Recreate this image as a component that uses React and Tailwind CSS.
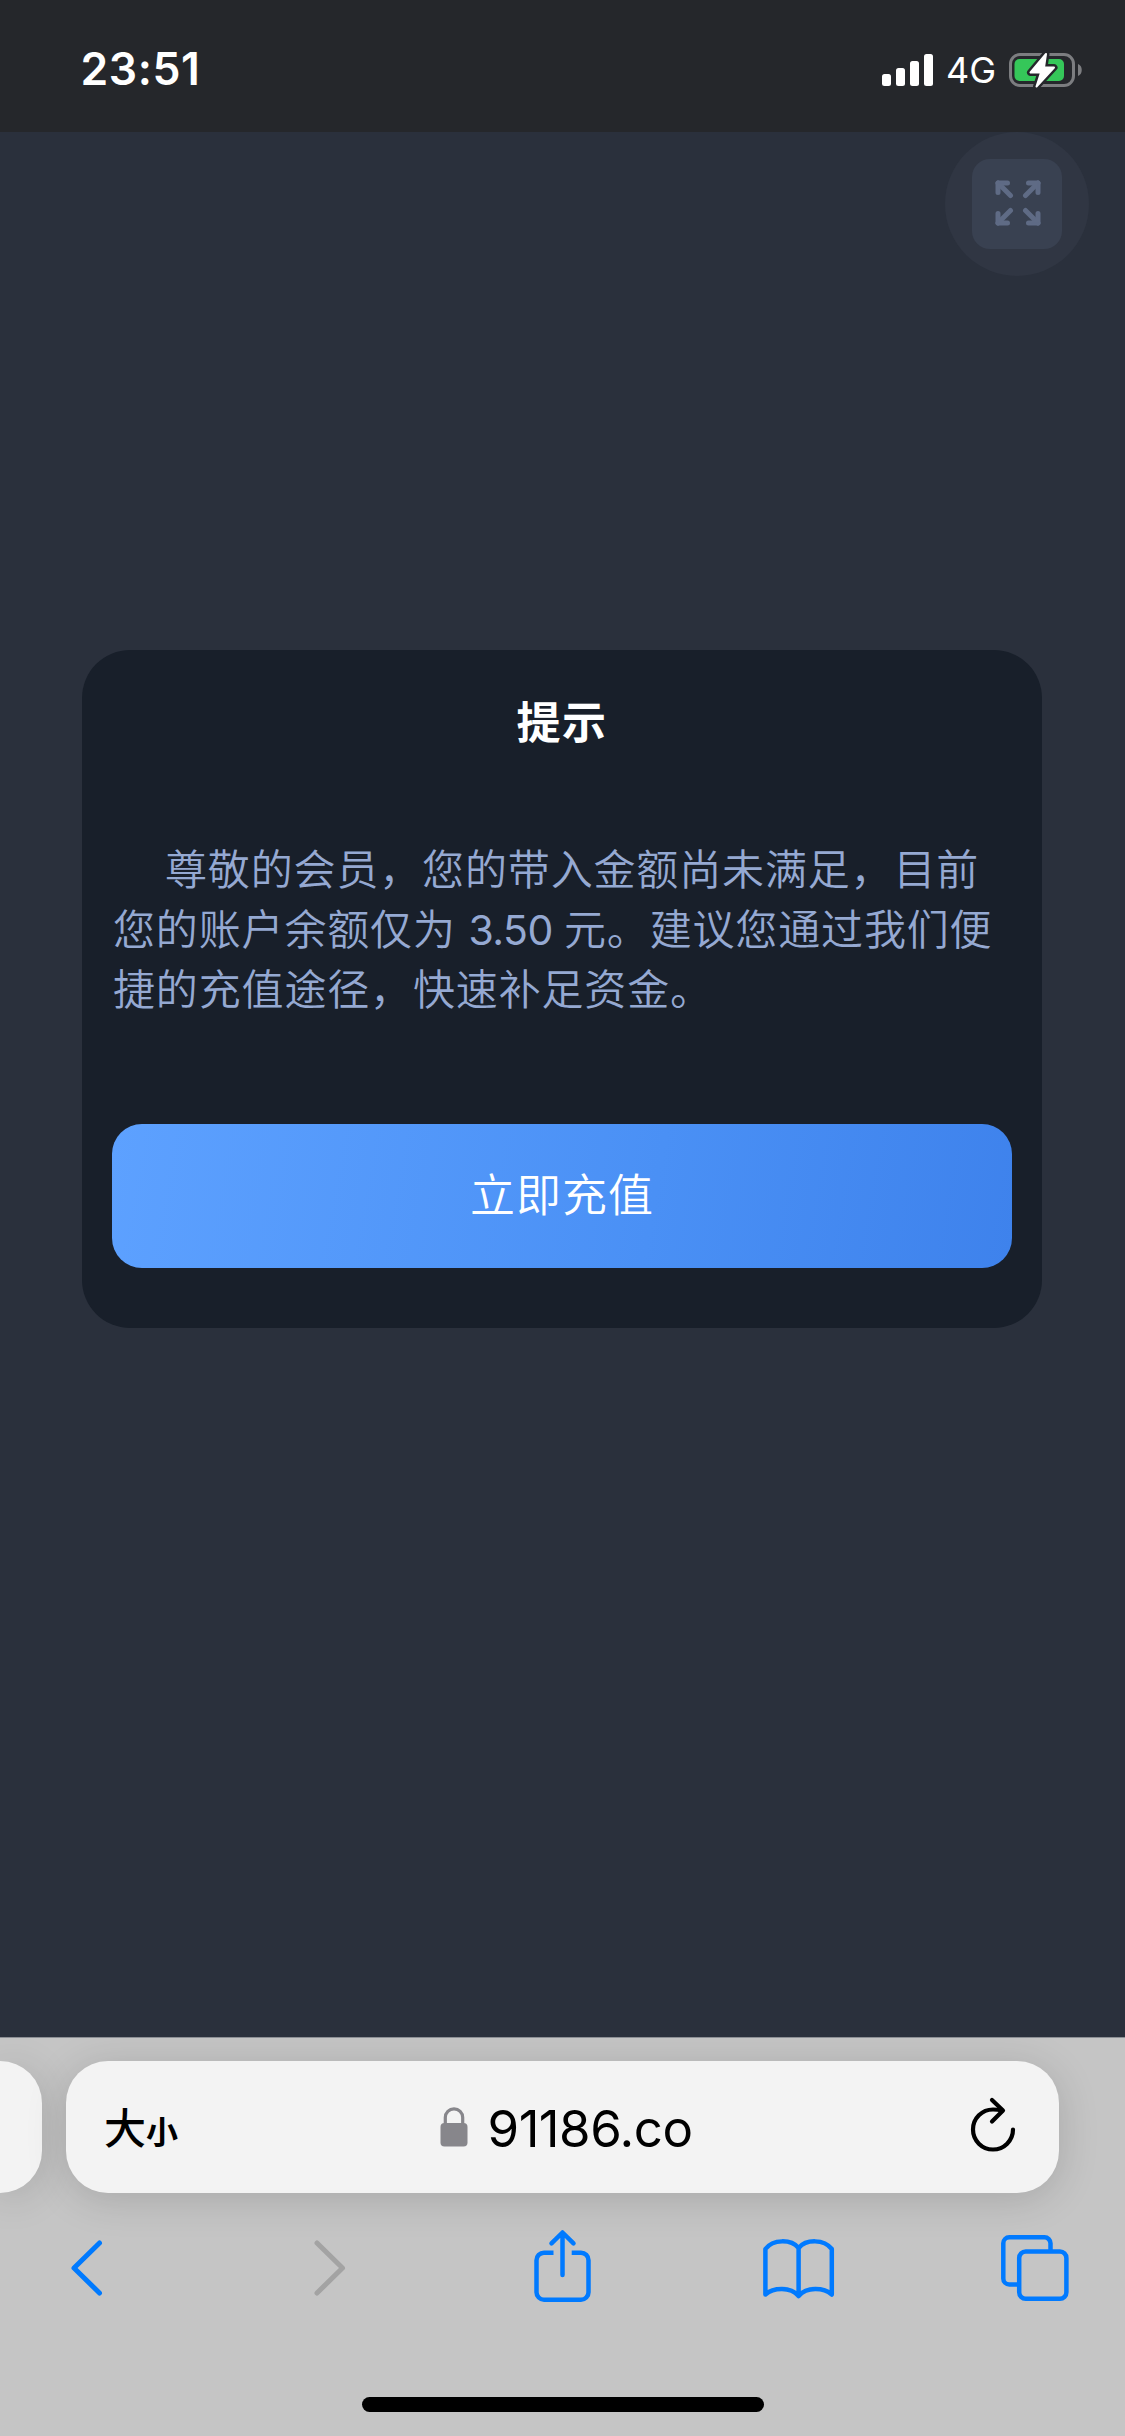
import React from 'react'

const StatusBar = () => {
  return (
    <div className='h-[132px] shrink-0 bg-[#25272b] flex items-start justify-between pl-[80.5px] pr-[42px] text-white'>
      <div className='mt-[42px] text-[44.5px] leading-[54px] font-semibold tracking-[0.600px]'>23:51</div>
      <div className='mt-[46px] flex items-center'>
        <svg width="53" height="46" viewBox="0 0 53 46" fill="white">
          <rect x="2" y="27" width="9" height="12" rx="2.5" />
          <rect x="16" y="21" width="9" height="18" rx="2.5" />
          <rect x="30" y="14" width="9" height="25" rx="2.5" />
          <rect x="44" y="7" width="9" height="32" rx="2.5" />
        </svg>
        <div className='ml-[13px] w-[48px] pt-[1px] text-[36px] leading-[46px] whitespace-nowrap'>4G</div>
        <svg className='ml-[13px]' width="76" height="46" viewBox="0 0 76 46">
          <rect x="3.5" y="7.5" width="63" height="31" rx="9.5" fill="none" stroke="#7c7d80" strokeWidth="3" />
          <rect x="7.5" y="12" width="49.5" height="22" rx="5" fill="#35c759" />
          <path d="M71 17c5 1.500 5 10.500 0 12z" fill="#7c7d80" />
          <path d="M39 7L23.500 25.500h10.500L29.500 39.500l17.500-19H37z" fill="white" stroke="#25272b" strokeWidth="7" strokeLinejoin="round" />
          <path d="M39 7L23.500 25.500h10.500L29.500 39.500l17.500-19H37z" fill="white" stroke="white" strokeWidth="2" strokeLinejoin="round" />
        </svg>
      </div>
    </div>
  )
}

const FullscreenButton = () => {
  return (
    <button className='w-[144px] h-[144px] rounded-full bg-[#303643] flex items-center justify-center'>
      <span className='w-[90px] h-[90px] rounded-[18px] bg-[#394151] flex items-center justify-center'>
        <svg className='ml-[2px] mb-[2px]' width="46" height="46" viewBox="0 0 46 46" fill="none" stroke="#5f6b85" strokeWidth="5" strokeLinecap="round" strokeLinejoin="round">
          <path d="M3 3l12.500 12.500M43 3L30.500 15.500M3 43l12.500-12.500M43 43L30.500 30.500" />
          <path d="M3 12.500V3h9.500M33.500 3h9.500v9.500M3 33.500v9.500h9.500M33.500 43h9.500v-9.500" />
          <path d="M3 3h7l-7 7zM43 3v7l-7-7zM3 43v-7l7 7zM43 43h-7l7-7z" fill="#5f6b85" strokeWidth="1" />
        </svg>
      </span>
    </button>
  )
}

const TipModal = ({ balance }) => {
  return (
    <div className='ml-[82px] w-[960px] h-[678px] rounded-[48px] bg-[#181f2a] px-[30px] flex flex-col'>
      <div className='mt-[43px] text-center text-[44px] leading-[60px] font-bold tracking-[1.500px] text-white'>提示</div>
      <p className='mt-[87px] ml-[1px] text-[42px] leading-[60px] tracking-[0.850px] indent-[52px] text-[#95a9d2] font-[350] whitespace-nowrap'>
        尊敬的会员，您的带入金额尚未满足，目前<br />
        您的账户余额仅为 <span className='text-[41px] tracking-[-0.500px] font-normal'>{balance} </span>元。建议您通过我们便<br />
        捷的充值途径，快速补足资金。
      </p>
      <button className='mt-auto mb-[60px] h-[144px] rounded-[30px] bg-[linear-gradient(100deg,#5da1ff,#4a90f5_60%,#3e82ec)] text-[45px] tracking-[1px] font-[350] text-white'>
        立即充值
      </button>
    </div>
  )
}

const AddressBar = () => {
  return (
    <div className='flex gap-[24px]'>
      <div className='w-[42px] h-[132px] rounded-r-[42px] bg-[#f3f3f3] shadow-[0_6px_40px_rgba(0,0,0,0.15)]'></div>
      <div className='w-[993px] h-[132px] rounded-[42px] bg-[#f3f3f3] shadow-[0_6px_40px_rgba(0,0,0,0.15)] flex items-center justify-between pl-[38px] pr-[40px] text-black'>
        <div className='w-[120px] mt-[7px] flex items-baseline leading-[60px]'>
          <span className='text-[42px] font-medium'>大</span>
          <span className='text-[32px] font-bold'>小</span>
        </div>
        <div className='ml-[9px] flex items-center'>
          <svg width="28" height="42" viewBox="0 0 28 42">
            <path d="M5.300 19v-7.500a8.700 8.700 0 0 1 17.400 0V19" fill="none" stroke="#87868b" strokeWidth="3.200" />
            <rect x="0.500" y="17" width="27" height="23.500" rx="4" fill="#87868b" />
          </svg>
          <span className='mt-[3px] ml-[20px] text-[51px] leading-[60px] tracking-[-0.500px]'>91186.co</span>
        </div>
        <div className='w-[120px] flex justify-end'>
          <svg width="52" height="60" viewBox="0 0 52 60" fill="none" stroke="black" strokeWidth="4.200" strokeLinecap="round" strokeLinejoin="round">
            <path d="M46 32.500a20 20 0 1 1-20-20c3 0 6 .3 9 1" />
            <path d="M25 3L36 13.500 25 24.500" />
          </svg>
        </div>
      </div>
    </div>
  )
}

const Toolbar = () => {
  return (
    <div className='mt-[35px] pl-[38px] pr-[42px] flex justify-between text-[#007aff]'>
      <svg width="96" height="80" viewBox="0 0 96 80" fill="none" stroke="currentColor" strokeWidth="5" strokeLinecap="round" strokeLinejoin="round">
        <path d="M61.500 15L36 40l25.500 25" />
      </svg>
      <svg className='text-[#a3a3a3]' width="96" height="80" viewBox="0 0 96 80" fill="none" stroke="currentColor" strokeWidth="5" strokeLinecap="round" strokeLinejoin="round">
        <path d="M42 15l25.500 25L42 65" />
      </svg>
      <svg width="96" height="80" viewBox="0 0 96 80" fill="none" stroke="currentColor" strokeWidth="4.500" strokeLinejoin="round">
        <path d="M40.500 24.700H31a7.500 7.500 0 0 0-7.500 7.500V64.200a7.500 7.500 0 0 0 7.500 7.500H68a7.500 7.500 0 0 0 7.500-7.500V32.200a7.500 7.500 0 0 0-7.500-7.500H58.700" />
        <path d="M49.500 5v42M38.500 15.300L49.500 4.500l11 10.800" strokeLinecap="round" />
      </svg>
      <svg width="96" height="80" viewBox="0 0 96 80" fill="none" stroke="currentColor" strokeWidth="4.500" strokeLinecap="round" strokeLinejoin="round">
        <path d="M48.600 20C41 11 23 11 15.400 21V66.500c8-7 25-8 33.200 1.500c8.200-9.500 25.200-8.500 33.200-1.500V21C74 11 56.200 11 48.600 20zM48.600 20v48" />
      </svg>
      <svg width="96" height="80" viewBox="0 0 96 80" fill="none" stroke="currentColor" strokeWidth="4.500">
        <path d="M63.500 23V15.300a6 6 0 0 0-6-6H22.300a6 6 0 0 0-6 6V50.500a6 6 0 0 0 6 6H32" />
        <rect x="32.200" y="23.500" width="47.200" height="47.200" rx="6.500" />
      </svg>
    </div>
  )
}

const App = () => {
  return (
    <div lang='zh-CN' className="w-[1125px] h-[2436px] overflow-hidden flex flex-col bg-[#2a303c] font-['Inter','Noto_Sans_CJK_SC',sans-serif]">
      <StatusBar />

      <div className='h-[1905px] shrink-0'>
        <div className='flex justify-end pr-[36px] mb-[374px]'>
          <FullscreenButton />
        </div>
        <TipModal balance="3.50" />
      </div>

      {/* browser bottom bar */}
      <div className='h-[399px] shrink-0 flex flex-col overflow-hidden bg-[#c5c5c5] border-t border-[#8b8e94] pt-[23px]'>
        <AddressBar />
        <Toolbar />
        <div className='mt-auto mb-[24px] ml-[362px] w-[402px] h-[15px] rounded-full bg-black'></div>
      </div>
    </div>
  )
}

export default App
